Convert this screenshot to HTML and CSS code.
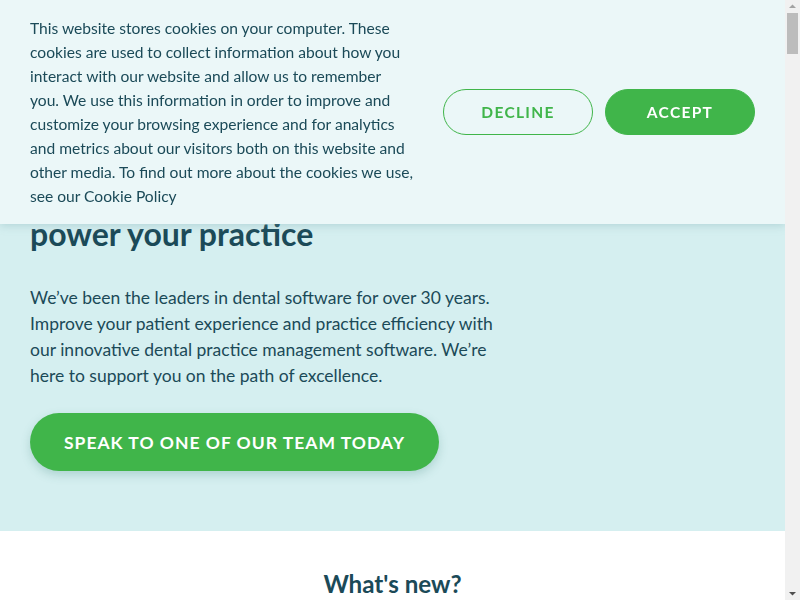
FILE: index.html
```html
<!DOCTYPE html>
<html lang="en">
<head>
<meta charset="utf-8">
<title>Dental practice software</title>
<link rel="stylesheet" href="styles.css">
</head>
<body>
<div class="cookie-banner">
  <p class="cookie-text">This website stores cookies on your computer. These cookies are used to collect information about how you interact with our website and allow us to remember<br>you. We use this information in order to improve and customize your browsing experience and for analytics and metrics about our visitors both on this website and other media. To find out more about the cookies we use, see our Cookie Policy</p>
  <div class="cookie-actions">
    <button class="btn-decline">DECLINE</button>
    <button class="btn-accept">ACCEPT</button>
  </div>
</div>

<section class="hero">
  <h1 class="hero-title">Dental software designed to<br>power your practice</h1>
  <p class="hero-text">We’ve been the leaders in dental software for over 30 years. Improve your patient experience and practice efficiency with our innovative dental practice management software. We’re here to support you on the path of excellence.</p>
  <a class="hero-cta" href="#">SPEAK TO ONE OF OUR TEAM TODAY</a>
</section>

<section class="news">
  <h2 class="news-title">What's new?</h2>
</section>

<div class="scrollbar" aria-hidden="true">
  <svg class="sb-arrow" width="15" height="13" viewBox="0 0 15 13"><path d="M4 8 L7.5 4.5 L11 8 Z" fill="#a3a3a3"/></svg>
  <div class="sb-thumb"></div>
  <div class="sb-track"></div>
  <svg class="sb-arrow" width="15" height="13" viewBox="0 0 15 13"><path d="M4 5 L7.5 8.5 L11 5 Z" fill="#505050"/></svg>
</div>
</body>
</html>
```

FILE: styles.css
```css
html, body {
  margin: 0;
  padding: 0;
}
body {
  font-family: Lato, "Open Sans", "Liberation Sans", sans-serif;
  color: #1b4a58;
  background: #ffffff;
  margin-right: 15px;
}
.cookie-banner {
  position: fixed;
  top: 0;
  left: 0;
  right: 15px;
  z-index: 10;
  height: 224px;
  box-sizing: border-box;
  padding: 16px 30px;
  background: #ebf7f8;
  box-shadow: 0 2px 8px rgba(120, 170, 175, 0.35);
  display: flex;
  align-items: center;
  justify-content: space-between;
}
.cookie-text {
  margin: 0;
  width: 388px;
  font-size: 15.6px;
  line-height: 24px;
  color: #1b4a58;
}
.cookie-actions {
  display: flex;
  gap: 12px;
}
.btn-decline,
.btn-accept {
  width: 150px;
  height: 46px;
  border-radius: 23px;
  font-family: inherit;
  font-size: 15.5px;
  font-weight: 700;
  letter-spacing: 1.3px;
  cursor: pointer;
  box-sizing: border-box;
  padding: 0;
}
.btn-decline {
  background: transparent;
  border: 1px solid #40b54a;
  color: #40b54a;
}
.btn-accept {
  background: #40b54a;
  border: 1px solid #40b54a;
  color: #ffffff;
}
.hero {
  background: #d5eff0;
  padding: 174px 30px 60px;
}
.hero-title {
  margin: 0;
  font-size: 32px;
  line-height: 40px;
  font-weight: 700;
  color: #1b4a58;
}
.hero-text {
  margin: 31px 0 24px;
  max-width: 490px;
  font-size: 17.5px;
  line-height: 26px;
  color: #1b4a58;
}
.hero-cta {
  display: inline-flex;
  align-items: center;
  justify-content: center;
  width: 409px;
  height: 58px;
  border-radius: 29px;
  background: #40b54a;
  color: #ffffff;
  font-size: 17.5px;
  font-weight: 700;
  letter-spacing: 1px;
  text-decoration: none;
  box-shadow: 0 4px 10px rgba(60, 130, 120, 0.25);
}
.news {
  padding: 37px 30px 0;
  min-height: 7800px;
  text-align: center;
}
.news-title {
  margin: 0;
  font-size: 24.2px;
  line-height: 32px;
  font-weight: 700;
  color: #1b4a58;
}
.scrollbar {
  position: fixed;
  top: 0;
  right: 0;
  bottom: 0;
  width: 15px;
  z-index: 20;
  background: #f1f1f1;
  display: flex;
  flex-direction: column;
}
.sb-arrow {
  display: block;
  flex: none;
}
.sb-thumb {
  flex: none;
  height: 41px;
  margin: 0 2px;
  background: #bcbcbc;
}
.sb-track {
  flex: 1;
}
```
